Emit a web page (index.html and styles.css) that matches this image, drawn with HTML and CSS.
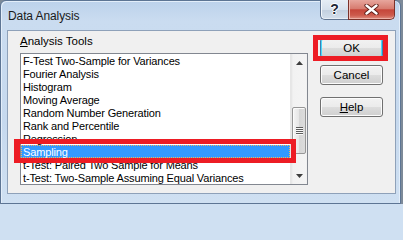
FILE: index.html
```html
<!DOCTYPE html>
<html>
<head>
<meta charset="utf-8">
<link rel="stylesheet" href="styles.css">
</head>
<body>
<div class="window">
  <div class="titlebar">
    <span class="title">Data Analysis</span>
    <div class="caption">
      <div class="cap-btn cap-help">?</div>
      <div class="cap-btn cap-close">
        <svg width="15" height="11" viewBox="0 0 15 11">
          <path d="M2.5 1.5 L12.5 9.5 M12.5 1.5 L2.5 9.5" stroke="#5a1a14" stroke-width="4.2" stroke-linecap="round"/>
          <path d="M2.5 1.5 L12.5 9.5 M12.5 1.5 L2.5 9.5" stroke="#ffffff" stroke-width="2.4" stroke-linecap="round"/>
        </svg>
      </div>
    </div>
  </div>
  <div class="client">
    <div class="tools">
      <div class="group-label"><span class="acc">A</span>nalysis Tools</div>
      <div class="listbox">
        <ul class="items">
          <li>F-Test Two-Sample for Variances</li>
          <li>Fourier Analysis</li>
          <li>Histogram</li>
          <li>Moving Average</li>
          <li>Random Number Generation</li>
          <li>Rank and Percentile</li>
          <li>Regression</li>
          <li class="selected"><span class="focus">Sampling</span></li>
          <li>t-Test: Paired Two Sample for Means</li>
          <li>t-Test: Two-Sample Assuming Equal Variances</li>
        </ul>
        <div class="scrollbar">
          <div class="sb-btn">
            <svg width="7" height="4" viewBox="0 0 7 4"><path d="M0 4 L3.5 0 L7 4 Z" fill="#3d3d3d"/></svg>
          </div>
          <div class="sb-track">
            <div class="thumb">
              <span class="grip"></span><span class="grip"></span><span class="grip"></span><span class="grip"></span>
            </div>
          </div>
          <div class="sb-btn">
            <svg width="7" height="4" viewBox="0 0 7 4"><path d="M0 0 L7 0 L3.5 4 Z" fill="#3d3d3d"/></svg>
          </div>
        </div>
      </div>
    </div>
    <div class="actions">
      <div class="btn btn-default marked">OK</div>
      <div class="btn">Cancel</div>
      <div class="btn btn-help"><span class="acc">H</span>elp</div>
    </div>
  </div>
</div>
</body>
</html>
```
FILE: styles.css
```css
* { box-sizing: border-box; }
html {
  margin: 0;
  padding: 0;
  background: #cfe0f2;
}
body {
  margin: 0;
  padding: 0;
  background: #7d8a99;
  width: 403px;
  height: 204px;
  overflow: hidden;
  font-family: "Liberation Sans", Arial, sans-serif;
}
.window {
  width: 401px;
  height: 204px;
  border: 1px solid #5d7594;
  border-radius: 6px 6px 0 0;
  background: linear-gradient(to bottom, #bcd2eb 0px, #cadcf0 20px, #c6d9ee 60%, #cfe0f2 100%);
  display: flex;
  flex-direction: column;
  box-shadow: inset 1px 1px 0 #e3eefa, inset -1px 0 0 #e3eefa;
}
.titlebar {
  height: 29px;
  flex: none;
  display: flex;
  justify-content: space-between;
  align-items: flex-start;
  padding-left: 7px;
  padding-right: 5px;
}
.title {
  font-size: 12px;
  line-height: 14px;
  padding-top: 8px;
  color: #1a1a1a;
  letter-spacing: -0.1px;
}
.caption {
  display: flex;
  margin-top: -1px;
}
.cap-btn {
  height: 20px;
  border: 1px solid #5f7390;
  border-top: none;
  display: flex;
  align-items: center;
  justify-content: center;
}
.cap-help {
  width: 28px;
  border-right: none;
  border-radius: 0 0 0 5px;
  background: linear-gradient(to bottom, #e6edf5 0%, #d6e0ec 50%, #c2cfdf 51%, #d3dfec 100%);
  box-shadow: inset 1px 0 0 #f4f8fc, inset 0 -1px 0 #e7eef6;
  font-weight: bold;
  font-size: 14px;
  color: #1d2736;
  text-shadow: 1px 0 0 #fff, -1px 0 0 #fff, 0 1px 0 #fff, 0 -1px 0 #fff;
  padding-bottom: 1px;
}
.cap-close {
  width: 47px;
  border-radius: 0 0 5px 0;
  border-color: #7b3129;
  background: linear-gradient(to bottom, #e7a69d 0%, #d77c70 45%, #c6463a 52%, #cd5a4c 80%, #e09083 100%);
  box-shadow: inset 1px 0 0 #f0c0b8, inset 0 -1px 0 #eeb0a6;
}
.client {
  height: 164px;
  flex: none;
  margin-left: 6px;
  width: 389px;
  border: 1px solid #8ea1b9;
  background: #f0f0f0;
  display: flex;
  align-items: flex-start;
}
.tools {
  padding-left: 12px;
  padding-top: 4px;
  display: flex;
  flex-direction: column;
}
.group-label {
  font-size: 11.5px;
  line-height: 13px;
  color: #000;
  height: 13px;
  margin-bottom: 5px;
}
.acc { text-decoration: underline; text-underline-offset: 1px; }
.listbox {
  width: 288px;
  height: 132px;
  border: 1px solid #828790;
  background: #fff;
  display: flex;
}
.items {
  list-style: none;
  margin: 0;
  padding: 0;
  width: 269px;
}
.items li {
  height: 13px;
  line-height: 15px;
  font-size: 11px;
  letter-spacing: -0.15px;
  padding-left: 2px;
  color: #000;
  white-space: nowrap;
}
.items li.selected {
  background: #3399ff;
  color: #fff;
  position: relative;
  padding-left: 0;
}
.items li.selected .focus {
  display: block;
  height: 13px;
  line-height: 13px;
  padding-left: 1px;
  border: 1px dotted #f2b45c;
}
.items li.selected::after {
  content: "";
  position: absolute;
  top: -6px;
  left: -7px;
  right: -6px;
  bottom: -5px;
  border: 5px solid #ed1c24;
  border-left-width: 6px;
}
.scrollbar {
  width: 17px;
  display: flex;
  flex-direction: column;
  background: linear-gradient(to right, #e3e3e3 0, #f2f2f2 2px, #f4f4f4 15px, #e8e8e8 17px);
  border-left: 1px solid #e6e6e6;
}
.sb-btn {
  height: 17px;
  display: flex;
  align-items: center;
  justify-content: center;
}
.sb-track {
  flex: 1;
  padding-top: 36px;
  padding-left: 1px;
  padding-right: 1px;
}
.thumb {
  height: 47px;
  border: 1px solid #979797;
  border-radius: 2px;
  background: linear-gradient(to right, #f4f4f4 0%, #e6e6e6 50%, #d6d6d6 51%, #dcdcdc 100%);
  box-shadow: inset 1px 1px 0 #fbfbfb;
  display: flex;
  flex-direction: column;
  justify-content: center;
  align-items: center;
  gap: 1px;
}
.grip {
  display: block;
  width: 7px;
  height: 1px;
  background: #5c5c5c;
  box-shadow: 0 1px 0 #f8f8f8;
}
.actions {
  margin-left: 12px;
  padding-top: 7px;
  display: flex;
  flex-direction: column;
}
.btn {
  width: 63px;
  height: 20px;
  border: 1px solid #707070;
  border-radius: 3px;
  background: linear-gradient(to bottom, #f2f2f2 0%, #ebebeb 50%, #dddddd 51%, #cfcfcf 100%);
  box-shadow: inset 0 0 0 1px #fcfcfc;
  font-size: 11.5px;
  font-weight: normal;
  line-height: 18px;
  text-align: center;
  color: #000;
}
.btn + .btn { margin-top: 7px; }
.btn-help { margin-top: 12px !important; }
.btn-default {
  border-color: #3c7fb1;
  box-shadow: inset 0 0 0 1px #48d8fb;
}
.marked { position: relative; }
.marked::after {
  content: "";
  position: absolute;
  top: -4px;
  left: -8px;
  right: -6px;
  bottom: -4px;
  border: 5px solid #ed1c24;
}
```
